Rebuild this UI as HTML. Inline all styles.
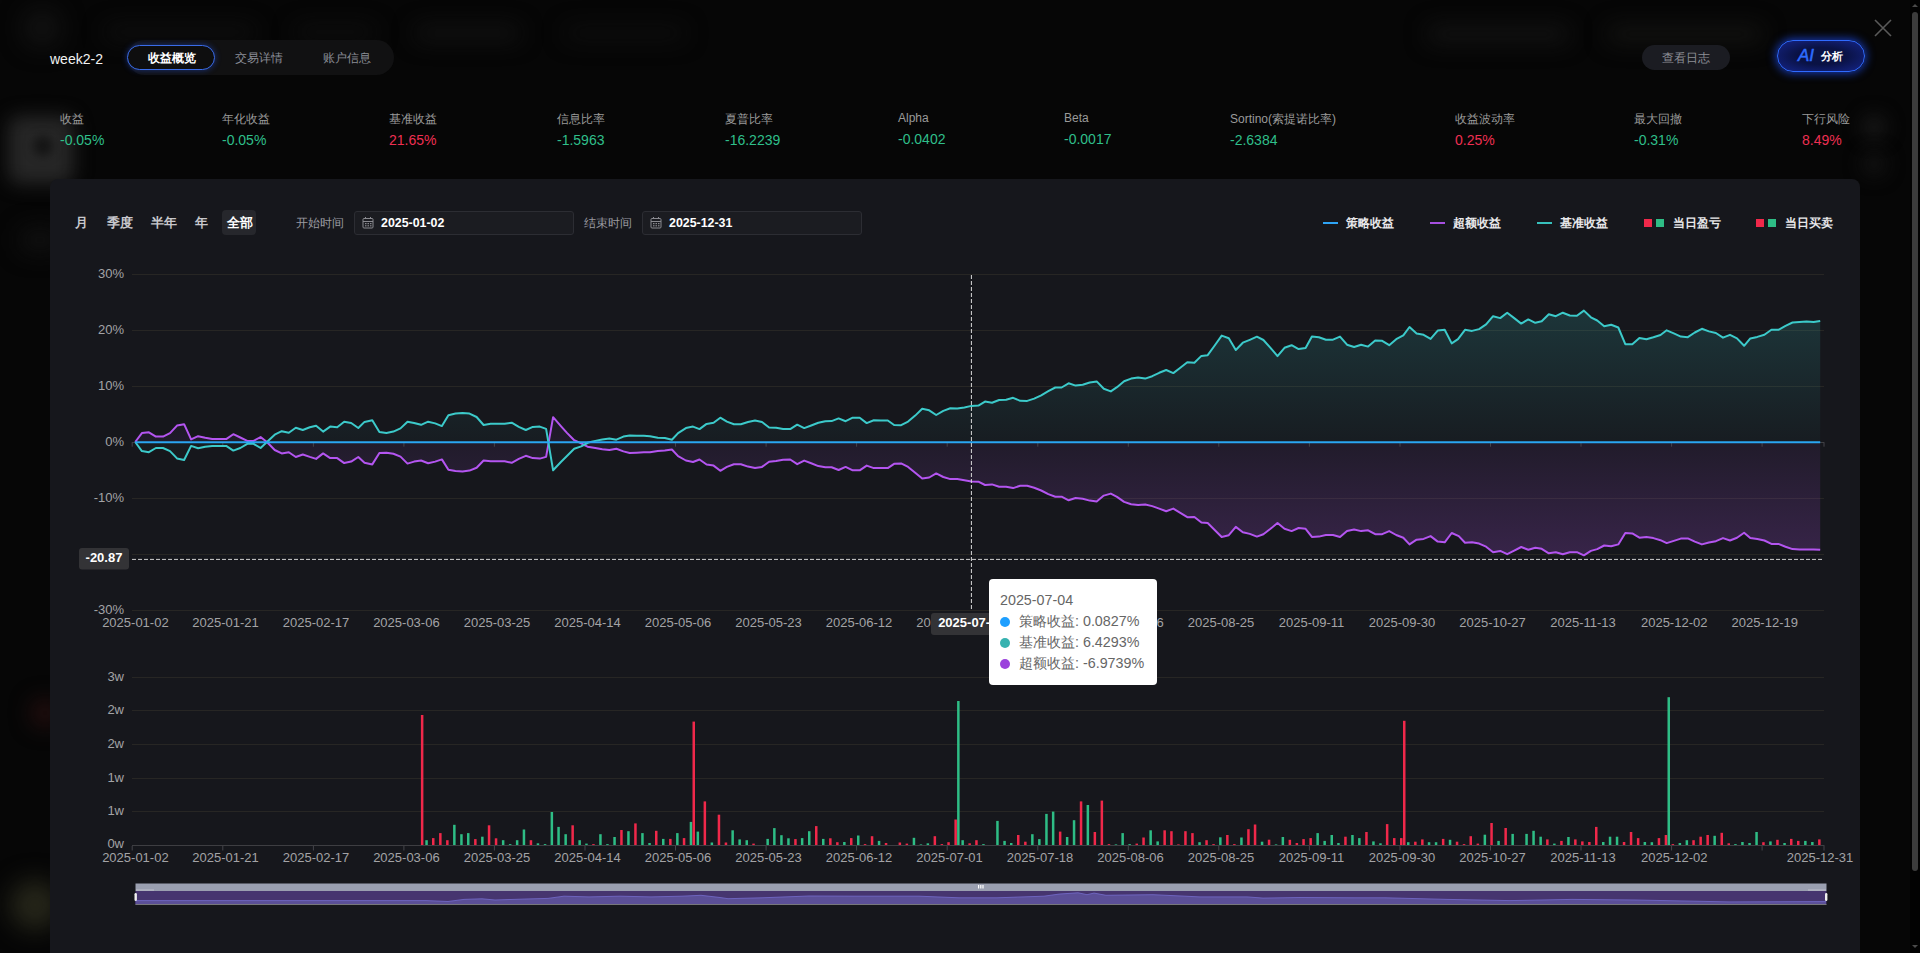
<!DOCTYPE html>
<html><head><meta charset="utf-8">
<style>
*{margin:0;padding:0;box-sizing:border-box}
html,body{width:1920px;height:953px;overflow:hidden;background:#070707;font-family:"Liberation Sans",sans-serif}
.abs{position:absolute;white-space:nowrap}
#bg{position:absolute;left:0;top:0;width:1920px;height:953px;background:#060606}
.blob{position:absolute;border-radius:50%;filter:blur(14px)}
.tabs{left:127px;top:40px;width:267px;height:35px;border-radius:18px;background:#111112}
.tab{font-size:12px;color:#8a8d96;top:50px;line-height:17px}
.act{left:127px;top:45px;width:88px;height:25px;border:1.6px solid #3a6ce8;border-radius:13px;background:#0e0e0f;box-shadow:0 0 6px rgba(40,90,255,.45)}
.lbl{font-size:12px;color:#9a9a9a;top:111px;line-height:16px}
.val{font-size:14px;top:131px;line-height:18px}
.g{color:#2fbf8a}.r{color:#ee2f52}
#panel{position:absolute;left:50px;top:179px;width:1810px;height:800px;background:#16171c;border-radius:8px}
.pb{font-size:12.5px;color:#c8c8cc;top:215px;line-height:16px;font-weight:bold}
.inp{top:211px;height:24px;border:1px solid #2c2d33;border-radius:3px;background:#1b1c21}
.dt{font-size:12.4px;color:#fff;font-weight:bold;line-height:16px}
.leg{font-size:12px;color:#e8e8ea;font-weight:bold;top:215px;line-height:16px}
#chart text{font-family:"Liberation Sans",sans-serif}
.yl{font-size:13px;fill:#a3a3a6}
.xl{font-size:13px;fill:#a3a3a6}
.lb{font-size:13px;fill:#fff;font-weight:bold}
.tip{left:989px;top:579px;width:168px;height:106px;background:#fff;border-radius:4px}
.tt{font-size:14.3px;color:#666;line-height:18px}
.dot{width:10px;height:10px;border-radius:5px}
</style></head><body>
<div id="bg"></div>
<div class="blob" style="left:28px;top:14px;width:28px;height:28px;background:#1c1c1c"></div>
<div class="blob" style="left:105px;top:26px;width:150px;height:12px;background:#111;border-radius:7px;filter:blur(11px)"></div>
<div class="blob" style="left:295px;top:26px;width:80px;height:12px;background:#101010;border-radius:7px;filter:blur(11px)"></div>
<div class="blob" style="left:415px;top:26px;width:105px;height:14px;background:#131313;border-radius:7px;filter:blur(11px)"></div>
<div class="blob" style="left:565px;top:27px;width:120px;height:12px;background:#0f0f0f;border-radius:7px;filter:blur(11px)"></div>
<div class="blob" style="left:1427px;top:26px;width:142px;height:16px;background:#141414;border-radius:8px;filter:blur(11px)"></div>
<div class="blob" style="left:1607px;top:26px;width:156px;height:16px;background:#141412;border-radius:8px;filter:blur(11px)"></div>
<div class="blob" style="left:8px;top:116px;width:66px;height:68px;background:#262626;border-radius:12px;filter:blur(9px)"></div>
<div class="blob" style="left:33px;top:136px;width:20px;height:20px;background:#151515;filter:blur(5px)"></div>
<div class="blob" style="left:20px;top:228px;width:40px;height:24px;background:#101010;border-radius:8px;filter:blur(11px)"></div>
<div class="blob" style="left:32px;top:700px;width:26px;height:26px;background:#2a1010;filter:blur(11px)"></div>
<div class="blob" style="left:10px;top:880px;width:50px;height:50px;background:#26261a;filter:blur(12px)"></div>
<div class="blob" style="left:1862px;top:115px;width:24px;height:24px;background:#181818;filter:blur(9px)"></div>
<div class="blob" style="left:1862px;top:152px;width:24px;height:24px;background:#121212;filter:blur(9px)"></div>

<!-- header -->
<div class="abs" style="left:50px;top:50px;font-size:14px;color:#f2f2f2;line-height:18px">week2-2</div>
<div class="abs tabs"></div>
<div class="abs act"></div>
<div class="abs" style="left:148px;top:50px;font-size:12px;color:#fff;font-weight:bold;line-height:17px">收益概览</div>
<div class="abs tab" style="left:235px">交易详情</div>
<div class="abs tab" style="left:323px">账户信息</div>

<div class="abs" style="left:1642px;top:45px;width:88px;height:25px;border-radius:13px;background:#1b1c22"></div>
<div class="abs" style="left:1662px;top:50px;font-size:12px;color:#8d8f96;line-height:17px">查看日志</div>
<div class="abs" style="left:1777px;top:40px;width:88px;height:32px;border-radius:16px;border:1.5px solid #2f6bff;background:radial-gradient(ellipse at center,#0a1244 40%,#15258a 100%);box-shadow:0 0 10px 1px rgba(30,80,255,.75)"></div>
<div class="abs" style="left:1798px;top:46px;font-size:17px;color:#2d6cff;font-weight:normal;font-style:italic;line-height:20px;-webkit-text-stroke:0.5px #2d6cff">AI</div>
<div class="abs" style="left:1821px;top:49px;font-size:11px;color:#fff;font-weight:bold;line-height:15px">分析</div>
<svg class="abs" style="left:1874px;top:19px" width="18" height="18"><path d="M1 1L17 17M17 1L1 17" stroke="#5a5a5a" stroke-width="1.6"/></svg>
<!-- scrollbar -->
<div class="abs" style="left:1910px;top:0;width:10px;height:953px;background:#020202"></div>
<div class="abs" style="left:1912px;top:12px;width:6px;height:859px;border-radius:3px;background:#3c3c3c"></div>
<svg class="abs" style="left:1910px;top:0" width="10" height="953"><path d="M2 7L5 4L8 7Z" fill="#4a4a4a"/><path d="M2 945L5 948L8 945Z" fill="#4a4a4a"/></svg>

<!-- metrics -->
<div class="abs lbl" style="left:60px">收益</div><div class="abs val g" style="left:60px">-0.05%</div>
<div class="abs lbl" style="left:222px">年化收益</div><div class="abs val g" style="left:222px">-0.05%</div>
<div class="abs lbl" style="left:389px">基准收益</div><div class="abs val r" style="left:389px">21.65%</div>
<div class="abs lbl" style="left:557px">信息比率</div><div class="abs val g" style="left:557px">-1.5963</div>
<div class="abs lbl" style="left:725px">夏普比率</div><div class="abs val g" style="left:725px">-16.2239</div>
<div class="abs lbl" style="left:898px;top:110px">Alpha</div><div class="abs val g" style="left:898px;top:130px">-0.0402</div>
<div class="abs lbl" style="left:1064px;top:110px">Beta</div><div class="abs val g" style="left:1064px;top:130px">-0.0017</div>
<div class="abs lbl" style="left:1230px">Sortino(索提诺比率)</div><div class="abs val g" style="left:1230px">-2.6384</div>
<div class="abs lbl" style="left:1455px">收益波动率</div><div class="abs val r" style="left:1455px">0.25%</div>
<div class="abs lbl" style="left:1634px">最大回撤</div><div class="abs val g" style="left:1634px">-0.31%</div>
<div class="abs lbl" style="left:1802px">下行风险</div><div class="abs val r" style="left:1802px">8.49%</div>

<div id="panel"></div>
<!-- period buttons -->
<div class="abs pb" style="left:75px">月</div>
<div class="abs pb" style="left:107px">季度</div>
<div class="abs pb" style="left:151px">半年</div>
<div class="abs pb" style="left:195px">年</div>
<div class="abs" style="left:222px;top:210px;width:34px;height:25px;border-radius:4px;background:#26272c"></div>
<div class="abs pb" style="left:227px;color:#fff">全部</div>
<div class="abs" style="left:296px;top:215px;font-size:12px;color:#9a9aa0;line-height:16px">开始时间</div>
<div class="abs inp" style="left:354px;width:220px"></div>
<div class="abs dt" style="left:381px;top:215px">2025-01-02</div>
<div class="abs" style="left:584px;top:215px;font-size:12px;color:#9a9aa0;line-height:16px">结束时间</div>
<div class="abs inp" style="left:642px;width:220px"></div>
<div class="abs dt" style="left:669px;top:215px">2025-12-31</div>

<!-- legend -->
<div class="abs" style="left:1323px;top:222px;width:15px;height:2px;background:#2ea4f5"></div>
<div class="abs leg" style="left:1346px">策略收益</div>
<div class="abs" style="left:1430px;top:222px;width:15px;height:2px;background:#a64fe0"></div>
<div class="abs leg" style="left:1453px">超额收益</div>
<div class="abs" style="left:1537px;top:222px;width:15px;height:2px;background:#37c0bc"></div>
<div class="abs leg" style="left:1560px">基准收益</div>
<div class="abs" style="left:1644px;top:219px;width:8px;height:8px;background:#f0284a"></div>
<div class="abs" style="left:1656px;top:219px;width:8px;height:8px;background:#2ebd85"></div>
<div class="abs leg" style="left:1673px">当日盈亏</div>
<div class="abs" style="left:1756px;top:219px;width:8px;height:8px;background:#f0284a"></div>
<div class="abs" style="left:1768px;top:219px;width:8px;height:8px;background:#2ebd85"></div>
<div class="abs leg" style="left:1785px">当日买卖</div>

<svg id="chart" class="abs" style="left:0;top:0" width="1920" height="953">
<!--CHART-->
<defs>
<linearGradient id="gt" gradientUnits="userSpaceOnUse" x1="0" y1="312" x2="0" y2="442"><stop offset="0" stop-color="#3cc8c8" stop-opacity="0.17"/><stop offset="1" stop-color="#3cc8c8" stop-opacity="0.03"/></linearGradient>
<linearGradient id="gp" gradientUnits="userSpaceOnUse" x1="0" y1="555" x2="0" y2="420"><stop offset="0" stop-color="#b455f0" stop-opacity="0.21"/><stop offset="1" stop-color="#b455f0" stop-opacity="0.04"/></linearGradient>
</defs>
<line x1="132" y1="274.5" x2="1824" y2="274.5" stroke="#272624" stroke-width="1"/>
<text x="124" y="277.8" text-anchor="end" class="yl">30%</text>
<line x1="132" y1="330.5" x2="1824" y2="330.5" stroke="#272624" stroke-width="1"/>
<text x="124" y="333.8" text-anchor="end" class="yl">20%</text>
<line x1="132" y1="386.5" x2="1824" y2="386.5" stroke="#272624" stroke-width="1"/>
<text x="124" y="389.8" text-anchor="end" class="yl">10%</text>
<line x1="132" y1="442.5" x2="1824" y2="442.5" stroke="#272624" stroke-width="1"/>
<text x="124" y="445.8" text-anchor="end" class="yl">0%</text>
<line x1="132" y1="498.5" x2="1824" y2="498.5" stroke="#272624" stroke-width="1"/>
<text x="124" y="501.8" text-anchor="end" class="yl">-10%</text>
<line x1="132" y1="554.5" x2="1824" y2="554.5" stroke="#272624" stroke-width="1"/>
<text x="124" y="557.8" text-anchor="end" class="yl">-20%</text>
<line x1="132" y1="610.5" x2="1824" y2="610.5" stroke="#272624" stroke-width="1"/>
<text x="124" y="613.8" text-anchor="end" class="yl">-30%</text>
<polygon points="135.2,442.2 135.2,442.0 141.9,451.1 148.9,452.2 155.9,448.0 163.0,448.0 170.0,451.1 177.0,458.4 184.1,460.0 191.1,445.9 198.1,448.3 205.2,446.7 212.2,445.9 219.2,445.9 226.2,445.9 233.3,450.6 240.3,448.0 247.3,443.8 253.6,443.8 260.6,448.0 266.9,442.0 274.7,434.7 281.7,431.2 288.8,432.8 295.8,427.7 302.8,430.0 309.8,427.3 316.1,425.8 323.1,431.6 330.2,426.6 337.2,427.2 344.2,421.7 351.2,423.0 358.3,428.0 364.5,421.9 372.3,420.3 379.4,432.0 386.4,433.1 393.4,431.6 400.5,428.4 407.5,421.7 414.1,423.0 421.1,424.8 428.1,421.7 435.2,423.4 441.9,426.1 448.4,415.2 455.5,413.6 462.5,413.1 469.5,413.6 476.6,417.0 483.6,425.0 490.6,423.8 497.7,423.8 504.7,423.8 511.7,422.7 518.8,426.9 525.8,430.0 532.8,426.9 539.8,426.6 546.1,428.9 553.1,470.3 560.9,462.0 567.2,455.8 574.2,448.8 581.2,446.4 588.3,442.5 595.3,440.9 602.3,439.4 609.4,438.6 616.4,439.7 623.4,436.6 629.7,435.5 636.7,435.8 643.8,435.8 650.0,436.2 657.8,437.8 664.8,438.1 671.9,439.7 678.1,433.1 685.9,428.1 693.0,426.6 699.5,429.1 706.6,423.9 713.6,422.8 720.3,417.7 726.9,421.6 733.9,424.2 740.9,424.2 748.0,422.0 755.0,420.5 762.0,422.0 769.1,427.5 776.1,427.8 783.1,429.1 790.2,429.1 797.2,424.7 804.2,428.1 811.2,425.5 818.3,422.8 825.3,421.2 831.6,421.1 838.6,418.4 845.6,421.2 852.7,417.7 859.7,417.7 866.7,423.1 873.8,420.3 880.8,420.5 887.8,420.5 894.1,425.0 901.1,425.2 908.1,421.6 915.2,415.6 922.2,408.8 929.2,410.3 936.2,415.0 943.3,410.9 950.3,408.3 957.3,408.6 964.4,407.5 971.4,405.9 978.4,405.6 985.0,401.6 992.0,402.8 999.1,400.0 1006.1,399.7 1013.1,397.8 1020.2,400.8 1027.2,400.9 1034.2,398.6 1041.2,395.3 1048.3,391.1 1055.3,387.5 1061.6,387.5 1068.6,383.3 1075.6,385.6 1082.7,384.8 1089.7,382.5 1096.7,381.4 1103.8,388.8 1110.8,391.4 1117.0,387.2 1124.1,381.2 1131.1,378.6 1138.1,377.5 1145.2,378.6 1152.2,376.2 1159.2,372.8 1166.2,370.0 1173.3,373.1 1180.3,367.7 1187.3,362.2 1194.4,362.7 1201.4,355.9 1207.7,355.2 1214.7,345.5 1221.7,335.6 1228.8,338.3 1235.8,350.0 1242.8,342.7 1249.8,339.8 1256.9,336.7 1263.4,340.0 1270.5,347.8 1277.5,356.1 1284.5,347.8 1291.6,345.2 1298.6,349.1 1305.6,348.1 1311.9,336.6 1318.9,337.3 1325.9,339.7 1333.0,339.7 1340.0,336.6 1347.0,344.7 1354.1,347.0 1361.1,344.7 1368.1,346.6 1375.2,340.5 1382.2,340.8 1389.2,345.2 1396.2,339.2 1403.3,335.3 1409.5,327.0 1416.6,333.4 1423.6,334.8 1430.6,338.9 1437.7,330.6 1444.7,329.8 1451.7,343.4 1458.0,339.2 1465.0,329.8 1472.0,330.9 1479.1,329.1 1486.1,324.4 1493.1,316.2 1500.2,318.1 1507.2,312.7 1514.2,318.1 1521.2,323.6 1528.3,319.4 1535.3,322.8 1541.7,321.2 1548.8,314.2 1555.8,316.2 1562.8,312.7 1569.8,315.5 1576.9,315.8 1583.9,310.6 1590.9,317.3 1597.2,320.5 1604.2,326.2 1611.2,324.7 1618.3,327.5 1625.3,344.2 1632.3,344.2 1639.4,338.0 1646.4,339.2 1653.4,337.2 1660.5,335.0 1666.7,330.3 1673.8,333.4 1680.8,336.6 1687.8,337.2 1694.8,332.5 1701.9,328.8 1708.9,331.4 1715.9,333.0 1723.0,337.7 1730.0,334.8 1737.0,338.4 1744.1,345.8 1750.3,338.4 1757.3,336.9 1764.4,334.8 1771.4,329.8 1778.4,329.8 1785.5,325.9 1792.5,322.5 1799.5,322.0 1806.6,321.6 1813.6,322.0 1820.2,320.9 1820.2,442.2" fill="url(#gt)"/>
<polygon points="135.2,442.2 135.2,442.0 141.9,433.1 148.9,432.3 155.9,436.6 163.0,436.6 170.0,433.1 177.0,425.6 184.1,424.2 191.1,439.4 198.1,436.2 205.2,437.8 212.2,439.1 219.2,439.1 226.2,439.1 233.3,434.2 240.3,437.5 247.3,440.9 253.6,440.9 260.6,437.0 266.9,442.0 274.7,450.0 281.7,453.4 288.8,452.2 295.8,457.0 302.8,454.5 309.8,456.9 316.1,458.9 323.1,453.4 330.2,458.1 337.2,458.1 344.2,463.1 351.2,461.6 358.3,457.0 364.5,462.8 372.3,464.4 379.4,453.0 386.4,452.7 393.4,453.8 400.5,456.6 407.5,463.6 414.1,461.6 421.1,460.5 428.1,463.3 435.2,461.6 441.9,459.4 448.4,469.8 455.5,470.9 462.5,471.4 469.5,470.6 476.6,467.8 483.6,460.5 490.6,461.2 497.7,461.2 504.7,461.2 511.7,462.8 518.8,458.9 525.8,455.8 532.8,458.1 539.8,458.6 546.1,456.9 553.1,417.2 560.9,426.1 567.2,433.1 574.2,440.2 581.2,443.3 587.5,446.7 595.3,448.0 602.3,449.2 609.4,450.0 616.4,448.8 623.4,451.4 629.7,453.0 636.7,452.7 643.8,452.3 650.0,452.2 657.8,451.1 664.8,450.6 671.9,449.5 678.1,456.1 685.9,460.5 693.0,462.0 699.5,459.5 706.6,464.5 713.6,465.6 720.3,470.8 726.9,466.9 733.9,464.2 740.9,464.2 748.0,466.6 755.0,468.1 762.0,466.9 769.1,461.7 776.1,461.1 783.1,459.8 790.2,459.5 797.2,464.2 804.2,460.6 811.2,463.3 818.3,466.1 825.3,467.2 831.6,467.2 838.6,470.0 845.6,466.9 852.7,470.3 859.7,470.3 866.7,465.6 873.8,468.1 880.8,468.1 887.8,468.1 894.1,463.8 901.1,463.4 908.1,466.9 915.2,472.8 922.2,478.6 929.2,477.5 936.2,473.4 943.3,477.0 950.3,479.1 957.3,479.1 964.4,480.2 971.4,481.4 978.4,481.7 985.0,485.0 992.0,484.4 999.1,486.7 1006.1,486.7 1013.1,488.1 1020.2,485.8 1027.2,485.8 1034.2,487.8 1041.2,490.5 1048.3,494.1 1055.3,496.7 1061.6,496.7 1068.6,500.3 1075.6,498.0 1082.7,498.8 1089.7,500.6 1096.7,501.4 1103.8,495.6 1110.8,493.6 1117.0,496.9 1124.1,501.9 1131.1,504.2 1138.1,505.0 1145.2,504.5 1152.2,506.1 1159.2,508.6 1166.2,511.2 1173.3,508.6 1180.3,512.8 1187.3,517.2 1194.4,517.0 1201.4,522.5 1207.7,523.0 1214.7,530.0 1221.7,537.0 1228.8,535.2 1235.8,526.9 1242.8,532.3 1249.8,533.9 1256.9,536.6 1263.4,534.2 1270.5,528.8 1277.5,523.0 1284.5,528.8 1291.6,531.1 1298.6,528.0 1305.6,528.8 1311.9,536.9 1318.9,536.6 1325.9,535.0 1333.0,535.0 1340.0,537.0 1347.0,531.1 1354.1,529.5 1361.1,531.1 1368.1,530.3 1375.2,534.2 1382.2,534.2 1389.2,531.1 1396.2,535.0 1403.3,537.7 1409.5,544.4 1416.6,539.7 1423.6,538.9 1430.6,536.1 1437.7,541.6 1444.7,542.3 1451.7,533.0 1458.8,536.1 1465.0,542.8 1472.0,542.3 1479.1,543.6 1486.1,546.7 1493.1,552.2 1500.2,550.9 1507.2,554.2 1514.2,550.6 1521.2,547.0 1528.3,549.8 1535.3,547.8 1541.7,548.8 1548.8,553.3 1555.8,552.2 1562.8,554.2 1569.8,552.2 1576.9,552.2 1583.9,555.3 1590.9,550.9 1597.2,549.1 1604.2,545.5 1611.2,546.2 1618.3,544.4 1625.3,533.0 1632.3,533.4 1639.4,537.7 1646.4,536.9 1653.4,538.1 1660.5,540.2 1666.7,543.1 1673.8,540.9 1680.8,538.6 1687.8,538.4 1694.8,541.6 1701.9,544.4 1708.9,542.5 1715.9,541.2 1723.0,538.1 1730.0,540.5 1737.0,537.8 1744.1,532.7 1750.3,538.1 1757.3,538.9 1764.4,540.5 1771.4,543.9 1778.4,543.9 1785.5,546.7 1792.5,549.1 1799.5,549.5 1806.6,549.5 1813.6,549.4 1820.2,549.8 1820.2,442.2" fill="url(#gp)"/>
<line x1="132" y1="442.5" x2="1824" y2="442.5" stroke="#3e3e42" stroke-width="1"/>
<line x1="132.2" y1="442.2" x2="132.2" y2="446.7" stroke="#45454a" stroke-width="1"/>
<line x1="222.8" y1="442.2" x2="222.8" y2="446.7" stroke="#45454a" stroke-width="1"/>
<line x1="313.4" y1="442.2" x2="313.4" y2="446.7" stroke="#45454a" stroke-width="1"/>
<line x1="403.9" y1="442.2" x2="403.9" y2="446.7" stroke="#45454a" stroke-width="1"/>
<line x1="494.4" y1="442.2" x2="494.4" y2="446.7" stroke="#45454a" stroke-width="1"/>
<line x1="585.0" y1="442.2" x2="585.0" y2="446.7" stroke="#45454a" stroke-width="1"/>
<line x1="675.5" y1="442.2" x2="675.5" y2="446.7" stroke="#45454a" stroke-width="1"/>
<line x1="766.1" y1="442.2" x2="766.1" y2="446.7" stroke="#45454a" stroke-width="1"/>
<line x1="856.6" y1="442.2" x2="856.6" y2="446.7" stroke="#45454a" stroke-width="1"/>
<line x1="947.2" y1="442.2" x2="947.2" y2="446.7" stroke="#45454a" stroke-width="1"/>
<line x1="1037.8" y1="442.2" x2="1037.8" y2="446.7" stroke="#45454a" stroke-width="1"/>
<line x1="1128.3" y1="442.2" x2="1128.3" y2="446.7" stroke="#45454a" stroke-width="1"/>
<line x1="1218.8" y1="442.2" x2="1218.8" y2="446.7" stroke="#45454a" stroke-width="1"/>
<line x1="1309.4" y1="442.2" x2="1309.4" y2="446.7" stroke="#45454a" stroke-width="1"/>
<line x1="1400.0" y1="442.2" x2="1400.0" y2="446.7" stroke="#45454a" stroke-width="1"/>
<line x1="1490.5" y1="442.2" x2="1490.5" y2="446.7" stroke="#45454a" stroke-width="1"/>
<line x1="1581.0" y1="442.2" x2="1581.0" y2="446.7" stroke="#45454a" stroke-width="1"/>
<line x1="1671.6" y1="442.2" x2="1671.6" y2="446.7" stroke="#45454a" stroke-width="1"/>
<line x1="1762.1" y1="442.2" x2="1762.1" y2="446.7" stroke="#45454a" stroke-width="1"/>
<line x1="1824" y1="442.2" x2="1824" y2="446.7" stroke="#45454a" stroke-width="1"/>
<polyline points="135.2,442.0 141.9,433.1 148.9,432.3 155.9,436.6 163.0,436.6 170.0,433.1 177.0,425.6 184.1,424.2 191.1,439.4 198.1,436.2 205.2,437.8 212.2,439.1 219.2,439.1 226.2,439.1 233.3,434.2 240.3,437.5 247.3,440.9 253.6,440.9 260.6,437.0 266.9,442.0 274.7,450.0 281.7,453.4 288.8,452.2 295.8,457.0 302.8,454.5 309.8,456.9 316.1,458.9 323.1,453.4 330.2,458.1 337.2,458.1 344.2,463.1 351.2,461.6 358.3,457.0 364.5,462.8 372.3,464.4 379.4,453.0 386.4,452.7 393.4,453.8 400.5,456.6 407.5,463.6 414.1,461.6 421.1,460.5 428.1,463.3 435.2,461.6 441.9,459.4 448.4,469.8 455.5,470.9 462.5,471.4 469.5,470.6 476.6,467.8 483.6,460.5 490.6,461.2 497.7,461.2 504.7,461.2 511.7,462.8 518.8,458.9 525.8,455.8 532.8,458.1 539.8,458.6 546.1,456.9 553.1,417.2 560.9,426.1 567.2,433.1 574.2,440.2 581.2,443.3 587.5,446.7 595.3,448.0 602.3,449.2 609.4,450.0 616.4,448.8 623.4,451.4 629.7,453.0 636.7,452.7 643.8,452.3 650.0,452.2 657.8,451.1 664.8,450.6 671.9,449.5 678.1,456.1 685.9,460.5 693.0,462.0 699.5,459.5 706.6,464.5 713.6,465.6 720.3,470.8 726.9,466.9 733.9,464.2 740.9,464.2 748.0,466.6 755.0,468.1 762.0,466.9 769.1,461.7 776.1,461.1 783.1,459.8 790.2,459.5 797.2,464.2 804.2,460.6 811.2,463.3 818.3,466.1 825.3,467.2 831.6,467.2 838.6,470.0 845.6,466.9 852.7,470.3 859.7,470.3 866.7,465.6 873.8,468.1 880.8,468.1 887.8,468.1 894.1,463.8 901.1,463.4 908.1,466.9 915.2,472.8 922.2,478.6 929.2,477.5 936.2,473.4 943.3,477.0 950.3,479.1 957.3,479.1 964.4,480.2 971.4,481.4 978.4,481.7 985.0,485.0 992.0,484.4 999.1,486.7 1006.1,486.7 1013.1,488.1 1020.2,485.8 1027.2,485.8 1034.2,487.8 1041.2,490.5 1048.3,494.1 1055.3,496.7 1061.6,496.7 1068.6,500.3 1075.6,498.0 1082.7,498.8 1089.7,500.6 1096.7,501.4 1103.8,495.6 1110.8,493.6 1117.0,496.9 1124.1,501.9 1131.1,504.2 1138.1,505.0 1145.2,504.5 1152.2,506.1 1159.2,508.6 1166.2,511.2 1173.3,508.6 1180.3,512.8 1187.3,517.2 1194.4,517.0 1201.4,522.5 1207.7,523.0 1214.7,530.0 1221.7,537.0 1228.8,535.2 1235.8,526.9 1242.8,532.3 1249.8,533.9 1256.9,536.6 1263.4,534.2 1270.5,528.8 1277.5,523.0 1284.5,528.8 1291.6,531.1 1298.6,528.0 1305.6,528.8 1311.9,536.9 1318.9,536.6 1325.9,535.0 1333.0,535.0 1340.0,537.0 1347.0,531.1 1354.1,529.5 1361.1,531.1 1368.1,530.3 1375.2,534.2 1382.2,534.2 1389.2,531.1 1396.2,535.0 1403.3,537.7 1409.5,544.4 1416.6,539.7 1423.6,538.9 1430.6,536.1 1437.7,541.6 1444.7,542.3 1451.7,533.0 1458.8,536.1 1465.0,542.8 1472.0,542.3 1479.1,543.6 1486.1,546.7 1493.1,552.2 1500.2,550.9 1507.2,554.2 1514.2,550.6 1521.2,547.0 1528.3,549.8 1535.3,547.8 1541.7,548.8 1548.8,553.3 1555.8,552.2 1562.8,554.2 1569.8,552.2 1576.9,552.2 1583.9,555.3 1590.9,550.9 1597.2,549.1 1604.2,545.5 1611.2,546.2 1618.3,544.4 1625.3,533.0 1632.3,533.4 1639.4,537.7 1646.4,536.9 1653.4,538.1 1660.5,540.2 1666.7,543.1 1673.8,540.9 1680.8,538.6 1687.8,538.4 1694.8,541.6 1701.9,544.4 1708.9,542.5 1715.9,541.2 1723.0,538.1 1730.0,540.5 1737.0,537.8 1744.1,532.7 1750.3,538.1 1757.3,538.9 1764.4,540.5 1771.4,543.9 1778.4,543.9 1785.5,546.7 1792.5,549.1 1799.5,549.5 1806.6,549.5 1813.6,549.4 1820.2,549.8" fill="none" stroke="#b455f0" stroke-width="2" stroke-linejoin="round"/>
<polyline points="135.2,442.0 141.9,451.1 148.9,452.2 155.9,448.0 163.0,448.0 170.0,451.1 177.0,458.4 184.1,460.0 191.1,445.9 198.1,448.3 205.2,446.7 212.2,445.9 219.2,445.9 226.2,445.9 233.3,450.6 240.3,448.0 247.3,443.8 253.6,443.8 260.6,448.0 266.9,442.0 274.7,434.7 281.7,431.2 288.8,432.8 295.8,427.7 302.8,430.0 309.8,427.3 316.1,425.8 323.1,431.6 330.2,426.6 337.2,427.2 344.2,421.7 351.2,423.0 358.3,428.0 364.5,421.9 372.3,420.3 379.4,432.0 386.4,433.1 393.4,431.6 400.5,428.4 407.5,421.7 414.1,423.0 421.1,424.8 428.1,421.7 435.2,423.4 441.9,426.1 448.4,415.2 455.5,413.6 462.5,413.1 469.5,413.6 476.6,417.0 483.6,425.0 490.6,423.8 497.7,423.8 504.7,423.8 511.7,422.7 518.8,426.9 525.8,430.0 532.8,426.9 539.8,426.6 546.1,428.9 553.1,470.3 560.9,462.0 567.2,455.8 574.2,448.8 581.2,446.4 588.3,442.5 595.3,440.9 602.3,439.4 609.4,438.6 616.4,439.7 623.4,436.6 629.7,435.5 636.7,435.8 643.8,435.8 650.0,436.2 657.8,437.8 664.8,438.1 671.9,439.7 678.1,433.1 685.9,428.1 693.0,426.6 699.5,429.1 706.6,423.9 713.6,422.8 720.3,417.7 726.9,421.6 733.9,424.2 740.9,424.2 748.0,422.0 755.0,420.5 762.0,422.0 769.1,427.5 776.1,427.8 783.1,429.1 790.2,429.1 797.2,424.7 804.2,428.1 811.2,425.5 818.3,422.8 825.3,421.2 831.6,421.1 838.6,418.4 845.6,421.2 852.7,417.7 859.7,417.7 866.7,423.1 873.8,420.3 880.8,420.5 887.8,420.5 894.1,425.0 901.1,425.2 908.1,421.6 915.2,415.6 922.2,408.8 929.2,410.3 936.2,415.0 943.3,410.9 950.3,408.3 957.3,408.6 964.4,407.5 971.4,405.9 978.4,405.6 985.0,401.6 992.0,402.8 999.1,400.0 1006.1,399.7 1013.1,397.8 1020.2,400.8 1027.2,400.9 1034.2,398.6 1041.2,395.3 1048.3,391.1 1055.3,387.5 1061.6,387.5 1068.6,383.3 1075.6,385.6 1082.7,384.8 1089.7,382.5 1096.7,381.4 1103.8,388.8 1110.8,391.4 1117.0,387.2 1124.1,381.2 1131.1,378.6 1138.1,377.5 1145.2,378.6 1152.2,376.2 1159.2,372.8 1166.2,370.0 1173.3,373.1 1180.3,367.7 1187.3,362.2 1194.4,362.7 1201.4,355.9 1207.7,355.2 1214.7,345.5 1221.7,335.6 1228.8,338.3 1235.8,350.0 1242.8,342.7 1249.8,339.8 1256.9,336.7 1263.4,340.0 1270.5,347.8 1277.5,356.1 1284.5,347.8 1291.6,345.2 1298.6,349.1 1305.6,348.1 1311.9,336.6 1318.9,337.3 1325.9,339.7 1333.0,339.7 1340.0,336.6 1347.0,344.7 1354.1,347.0 1361.1,344.7 1368.1,346.6 1375.2,340.5 1382.2,340.8 1389.2,345.2 1396.2,339.2 1403.3,335.3 1409.5,327.0 1416.6,333.4 1423.6,334.8 1430.6,338.9 1437.7,330.6 1444.7,329.8 1451.7,343.4 1458.0,339.2 1465.0,329.8 1472.0,330.9 1479.1,329.1 1486.1,324.4 1493.1,316.2 1500.2,318.1 1507.2,312.7 1514.2,318.1 1521.2,323.6 1528.3,319.4 1535.3,322.8 1541.7,321.2 1548.8,314.2 1555.8,316.2 1562.8,312.7 1569.8,315.5 1576.9,315.8 1583.9,310.6 1590.9,317.3 1597.2,320.5 1604.2,326.2 1611.2,324.7 1618.3,327.5 1625.3,344.2 1632.3,344.2 1639.4,338.0 1646.4,339.2 1653.4,337.2 1660.5,335.0 1666.7,330.3 1673.8,333.4 1680.8,336.6 1687.8,337.2 1694.8,332.5 1701.9,328.8 1708.9,331.4 1715.9,333.0 1723.0,337.7 1730.0,334.8 1737.0,338.4 1744.1,345.8 1750.3,338.4 1757.3,336.9 1764.4,334.8 1771.4,329.8 1778.4,329.8 1785.5,325.9 1792.5,322.5 1799.5,322.0 1806.6,321.6 1813.6,322.0 1820.2,320.9" fill="none" stroke="#3ccaca" stroke-width="2" stroke-linejoin="round"/>
<line x1="135.2" y1="442.2" x2="1820.2" y2="442.2" stroke="#2aa6f2" stroke-width="2"/>
<line x1="132" y1="559.4" x2="1822" y2="559.4" stroke="#cfcfcf" stroke-width="1" stroke-dasharray="4,2"/>
<line x1="971.4" y1="275" x2="971.4" y2="610" stroke="#d8d8d8" stroke-width="1" stroke-dasharray="4,2"/>
<rect x="79" y="548" width="50" height="21.5" rx="3" fill="#333336"/>
<text x="104" y="561.5" text-anchor="middle" class="lb">-20.87</text>
<text x="135.4" y="627" text-anchor="middle" class="xl">2025-01-02</text>
<text x="225.5" y="627" text-anchor="middle" class="xl">2025-01-21</text>
<text x="316" y="627" text-anchor="middle" class="xl">2025-02-17</text>
<text x="406.4" y="627" text-anchor="middle" class="xl">2025-03-06</text>
<text x="497" y="627" text-anchor="middle" class="xl">2025-03-25</text>
<text x="587.5" y="627" text-anchor="middle" class="xl">2025-04-14</text>
<text x="678" y="627" text-anchor="middle" class="xl">2025-05-06</text>
<text x="768.5" y="627" text-anchor="middle" class="xl">2025-05-23</text>
<text x="859" y="627" text-anchor="middle" class="xl">2025-06-12</text>
<text x="949.5" y="627" text-anchor="middle" class="xl">2025-07-01</text>
<text x="1040" y="627" text-anchor="middle" class="xl">2025-07-18</text>
<text x="1130.5" y="627" text-anchor="middle" class="xl">2025-08-06</text>
<text x="1221" y="627" text-anchor="middle" class="xl">2025-08-25</text>
<text x="1311.5" y="627" text-anchor="middle" class="xl">2025-09-11</text>
<text x="1402" y="627" text-anchor="middle" class="xl">2025-09-30</text>
<text x="1492.5" y="627" text-anchor="middle" class="xl">2025-10-27</text>
<text x="1583" y="627" text-anchor="middle" class="xl">2025-11-13</text>
<text x="1674.2" y="627" text-anchor="middle" class="xl">2025-12-02</text>
<text x="1764.7" y="627" text-anchor="middle" class="xl">2025-12-19</text>
<rect x="931" y="613" width="80" height="22" rx="3" fill="#333336"/>
<text x="971.4" y="626.8" text-anchor="middle" class="lb">2025-07-04</text>
<g stroke="#8a8a90" stroke-width="1" fill="none"><rect x="363.0" y="218.5" width="10" height="9.5" rx="1"/><line x1="363.0" y1="221.5" x2="373.0" y2="221.5"/><line x1="365.5" y1="217" x2="365.5" y2="219"/><line x1="370.5" y1="217" x2="370.5" y2="219"/></g>
<g fill="#8a8a90"><rect x="365.0" y="223" width="1.5" height="1.2"/><rect x="367.5" y="223" width="1.5" height="1.2"/><rect x="370.0" y="223" width="1.5" height="1.2"/><rect x="365.0" y="225.2" width="1.5" height="1.2"/><rect x="367.5" y="225.2" width="1.5" height="1.2"/><rect x="370.0" y="225.2" width="1.5" height="1.2"/></g>
<g stroke="#8a8a90" stroke-width="1" fill="none"><rect x="651.0" y="218.5" width="10" height="9.5" rx="1"/><line x1="651.0" y1="221.5" x2="661.0" y2="221.5"/><line x1="653.5" y1="217" x2="653.5" y2="219"/><line x1="658.5" y1="217" x2="658.5" y2="219"/></g>
<g fill="#8a8a90"><rect x="653.0" y="223" width="1.5" height="1.2"/><rect x="655.5" y="223" width="1.5" height="1.2"/><rect x="658.0" y="223" width="1.5" height="1.2"/><rect x="653.0" y="225.2" width="1.5" height="1.2"/><rect x="655.5" y="225.2" width="1.5" height="1.2"/><rect x="658.0" y="225.2" width="1.5" height="1.2"/></g>
<line x1="132" y1="677.5" x2="1824" y2="677.5" stroke="#272624" stroke-width="1"/>
<text x="124" y="680.8" text-anchor="end" class="yl">3w</text>
<line x1="132" y1="710.5" x2="1824" y2="710.5" stroke="#272624" stroke-width="1"/>
<text x="124" y="713.8" text-anchor="end" class="yl">2w</text>
<line x1="132" y1="744.5" x2="1824" y2="744.5" stroke="#272624" stroke-width="1"/>
<text x="124" y="747.8" text-anchor="end" class="yl">2w</text>
<line x1="132" y1="778.5" x2="1824" y2="778.5" stroke="#272624" stroke-width="1"/>
<text x="124" y="781.8" text-anchor="end" class="yl">1w</text>
<line x1="132" y1="811.5" x2="1824" y2="811.5" stroke="#272624" stroke-width="1"/>
<text x="124" y="814.8" text-anchor="end" class="yl">1w</text>
<line x1="132" y1="845.5" x2="1824.5" y2="845.5" stroke="#3e3e42" stroke-width="1"/>
<text x="124" y="848.2" text-anchor="end" class="yl">0w</text>
<line x1="132.2" y1="846" x2="132.2" y2="850.5" stroke="#45454a" stroke-width="1"/>
<line x1="222.8" y1="846" x2="222.8" y2="850.5" stroke="#45454a" stroke-width="1"/>
<line x1="313.4" y1="846" x2="313.4" y2="850.5" stroke="#45454a" stroke-width="1"/>
<line x1="403.9" y1="846" x2="403.9" y2="850.5" stroke="#45454a" stroke-width="1"/>
<line x1="494.4" y1="846" x2="494.4" y2="850.5" stroke="#45454a" stroke-width="1"/>
<line x1="585.0" y1="846" x2="585.0" y2="850.5" stroke="#45454a" stroke-width="1"/>
<line x1="675.5" y1="846" x2="675.5" y2="850.5" stroke="#45454a" stroke-width="1"/>
<line x1="766.1" y1="846" x2="766.1" y2="850.5" stroke="#45454a" stroke-width="1"/>
<line x1="856.6" y1="846" x2="856.6" y2="850.5" stroke="#45454a" stroke-width="1"/>
<line x1="947.2" y1="846" x2="947.2" y2="850.5" stroke="#45454a" stroke-width="1"/>
<line x1="1037.8" y1="846" x2="1037.8" y2="850.5" stroke="#45454a" stroke-width="1"/>
<line x1="1128.3" y1="846" x2="1128.3" y2="850.5" stroke="#45454a" stroke-width="1"/>
<line x1="1218.8" y1="846" x2="1218.8" y2="850.5" stroke="#45454a" stroke-width="1"/>
<line x1="1309.4" y1="846" x2="1309.4" y2="850.5" stroke="#45454a" stroke-width="1"/>
<line x1="1400.0" y1="846" x2="1400.0" y2="850.5" stroke="#45454a" stroke-width="1"/>
<line x1="1490.5" y1="846" x2="1490.5" y2="850.5" stroke="#45454a" stroke-width="1"/>
<line x1="1581.0" y1="846" x2="1581.0" y2="850.5" stroke="#45454a" stroke-width="1"/>
<line x1="1671.6" y1="846" x2="1671.6" y2="850.5" stroke="#45454a" stroke-width="1"/>
<line x1="1762.1" y1="846" x2="1762.1" y2="850.5" stroke="#45454a" stroke-width="1"/>
<line x1="1824" y1="846" x2="1824" y2="850.5" stroke="#45454a" stroke-width="1"/>
<rect x="425.3" y="840.2" width="2.5" height="4.8" fill="#2ebd85"/>
<rect x="432.0" y="838.1" width="2.5" height="6.9" fill="#f0284a"/>
<rect x="439.1" y="833.1" width="2.5" height="11.9" fill="#f0284a"/>
<rect x="446.1" y="840.2" width="2.5" height="4.8" fill="#f0284a"/>
<rect x="453.1" y="824.8" width="2.5" height="20.2" fill="#2ebd85"/>
<rect x="460.2" y="834.2" width="2.5" height="10.8" fill="#2ebd85"/>
<rect x="467.0" y="833.1" width="2.5" height="11.9" fill="#2ebd85"/>
<rect x="474.1" y="839.1" width="2.5" height="5.9" fill="#f0284a"/>
<rect x="481.1" y="836.7" width="2.5" height="8.3" fill="#2ebd85"/>
<rect x="487.8" y="825.3" width="2.5" height="19.7" fill="#f0284a"/>
<rect x="494.8" y="838.3" width="2.5" height="6.7" fill="#f0284a"/>
<rect x="501.9" y="840.2" width="2.5" height="4.8" fill="#2ebd85"/>
<rect x="508.9" y="844.1" width="2.5" height="0.9" fill="#2ebd85"/>
<rect x="515.9" y="840.2" width="2.5" height="4.8" fill="#2ebd85"/>
<rect x="522.7" y="829.5" width="2.5" height="15.5" fill="#2ebd85"/>
<rect x="529.7" y="840.2" width="2.5" height="4.8" fill="#f0284a"/>
<rect x="536.7" y="843.3" width="2.5" height="1.7" fill="#2ebd85"/>
<rect x="543.8" y="844.1" width="2.5" height="0.9" fill="#2ebd85"/>
<rect x="550.6" y="812.0" width="2.5" height="33.0" fill="#2ebd85"/>
<rect x="557.3" y="826.9" width="2.5" height="18.1" fill="#2ebd85"/>
<rect x="564.4" y="834.2" width="2.5" height="10.8" fill="#2ebd85"/>
<rect x="571.4" y="825.3" width="2.5" height="19.7" fill="#f0284a"/>
<rect x="578.4" y="840.2" width="2.5" height="4.8" fill="#2ebd85"/>
<rect x="585.2" y="843.6" width="2.5" height="1.4" fill="#2ebd85"/>
<rect x="592.2" y="844.1" width="2.5" height="0.9" fill="#f0284a"/>
<rect x="599.2" y="834.2" width="2.5" height="10.8" fill="#2ebd85"/>
<rect x="606.2" y="844.1" width="2.5" height="0.9" fill="#2ebd85"/>
<rect x="613.3" y="837.0" width="2.5" height="8.0" fill="#2ebd85"/>
<rect x="620.2" y="830.0" width="2.5" height="15.0" fill="#f0284a"/>
<rect x="627.2" y="831.2" width="2.5" height="13.8" fill="#2ebd85"/>
<rect x="634.2" y="823.4" width="2.5" height="21.6" fill="#f0284a"/>
<rect x="641.2" y="833.1" width="2.5" height="11.9" fill="#2ebd85"/>
<rect x="648.3" y="843.0" width="2.5" height="2.0" fill="#2ebd85"/>
<rect x="655.0" y="830.8" width="2.5" height="14.2" fill="#f0284a"/>
<rect x="662.0" y="838.9" width="2.5" height="6.1" fill="#2ebd85"/>
<rect x="669.1" y="838.9" width="2.5" height="6.1" fill="#f0284a"/>
<rect x="676.1" y="833.1" width="2.5" height="11.9" fill="#2ebd85"/>
<rect x="682.8" y="838.1" width="2.5" height="6.9" fill="#f0284a"/>
<rect x="689.7" y="821.9" width="2.5" height="23.1" fill="#2ebd85"/>
<rect x="696.6" y="831.6" width="2.5" height="13.4" fill="#2ebd85"/>
<rect x="703.6" y="801.4" width="2.5" height="43.6" fill="#f0284a"/>
<rect x="710.6" y="842.5" width="2.5" height="2.5" fill="#2ebd85"/>
<rect x="717.7" y="814.7" width="2.5" height="30.3" fill="#f0284a"/>
<rect x="724.7" y="842.5" width="2.5" height="2.5" fill="#f0284a"/>
<rect x="731.4" y="830.3" width="2.5" height="14.7" fill="#2ebd85"/>
<rect x="738.4" y="839.4" width="2.5" height="5.6" fill="#2ebd85"/>
<rect x="745.5" y="840.2" width="2.5" height="4.8" fill="#2ebd85"/>
<rect x="752.3" y="843.6" width="2.5" height="1.4" fill="#f0284a"/>
<rect x="766.4" y="838.9" width="2.5" height="6.1" fill="#2ebd85"/>
<rect x="773.1" y="828.1" width="2.5" height="16.9" fill="#2ebd85"/>
<rect x="780.2" y="835.2" width="2.5" height="9.8" fill="#2ebd85"/>
<rect x="787.2" y="838.3" width="2.5" height="6.7" fill="#2ebd85"/>
<rect x="794.2" y="839.1" width="2.5" height="5.9" fill="#f0284a"/>
<rect x="800.9" y="838.1" width="2.5" height="6.9" fill="#2ebd85"/>
<rect x="808.0" y="831.2" width="2.5" height="13.8" fill="#2ebd85"/>
<rect x="815.0" y="826.1" width="2.5" height="18.9" fill="#f0284a"/>
<rect x="822.0" y="838.9" width="2.5" height="6.1" fill="#2ebd85"/>
<rect x="829.1" y="838.3" width="2.5" height="6.7" fill="#f0284a"/>
<rect x="836.1" y="842.2" width="2.5" height="2.8" fill="#f0284a"/>
<rect x="843.1" y="842.0" width="2.5" height="3.0" fill="#2ebd85"/>
<rect x="850.0" y="838.1" width="2.5" height="6.9" fill="#f0284a"/>
<rect x="857.0" y="835.5" width="2.5" height="9.5" fill="#2ebd85"/>
<rect x="863.8" y="844.1" width="2.5" height="0.9" fill="#f0284a"/>
<rect x="870.8" y="836.2" width="2.5" height="8.8" fill="#f0284a"/>
<rect x="877.8" y="840.9" width="2.5" height="4.1" fill="#2ebd85"/>
<rect x="884.8" y="843.0" width="2.5" height="2.0" fill="#f0284a"/>
<rect x="898.6" y="842.5" width="2.5" height="2.5" fill="#f0284a"/>
<rect x="905.6" y="843.6" width="2.5" height="1.4" fill="#f0284a"/>
<rect x="912.7" y="837.8" width="2.5" height="7.2" fill="#2ebd85"/>
<rect x="919.7" y="844.4" width="2.5" height="0.6" fill="#2ebd85"/>
<rect x="926.6" y="843.3" width="2.5" height="1.7" fill="#2ebd85"/>
<rect x="933.6" y="836.2" width="2.5" height="8.8" fill="#f0284a"/>
<rect x="940.6" y="844.1" width="2.5" height="0.9" fill="#f0284a"/>
<rect x="947.3" y="842.2" width="2.5" height="2.8" fill="#f0284a"/>
<rect x="954.4" y="819.5" width="2.5" height="25.5" fill="#f0284a"/>
<rect x="961.4" y="840.2" width="2.5" height="4.8" fill="#2ebd85"/>
<rect x="968.4" y="843.3" width="2.5" height="1.7" fill="#f0284a"/>
<rect x="975.2" y="840.2" width="2.5" height="4.8" fill="#f0284a"/>
<rect x="982.2" y="844.1" width="2.5" height="0.9" fill="#2ebd85"/>
<rect x="996.2" y="820.9" width="2.5" height="24.1" fill="#2ebd85"/>
<rect x="1003.3" y="840.9" width="2.5" height="4.1" fill="#2ebd85"/>
<rect x="1010.0" y="843.0" width="2.5" height="2.0" fill="#2ebd85"/>
<rect x="1017.0" y="835.0" width="2.5" height="10.0" fill="#f0284a"/>
<rect x="1024.1" y="841.7" width="2.5" height="3.3" fill="#f0284a"/>
<rect x="1031.1" y="834.2" width="2.5" height="10.8" fill="#2ebd85"/>
<rect x="1038.1" y="839.1" width="2.5" height="5.9" fill="#2ebd85"/>
<rect x="1045.2" y="813.9" width="2.5" height="31.1" fill="#2ebd85"/>
<rect x="1051.9" y="811.6" width="2.5" height="33.4" fill="#2ebd85"/>
<rect x="1058.9" y="831.6" width="2.5" height="13.4" fill="#f0284a"/>
<rect x="1065.9" y="837.0" width="2.5" height="8.0" fill="#2ebd85"/>
<rect x="1072.8" y="820.2" width="2.5" height="24.8" fill="#2ebd85"/>
<rect x="1079.8" y="801.4" width="2.5" height="43.6" fill="#f0284a"/>
<rect x="1086.6" y="805.0" width="2.5" height="40.0" fill="#2ebd85"/>
<rect x="1093.6" y="832.0" width="2.5" height="13.0" fill="#f0284a"/>
<rect x="1100.6" y="800.6" width="2.5" height="44.4" fill="#f0284a"/>
<rect x="1107.7" y="844.1" width="2.5" height="0.9" fill="#f0284a"/>
<rect x="1114.7" y="844.4" width="2.5" height="0.6" fill="#2ebd85"/>
<rect x="1121.4" y="833.1" width="2.5" height="11.9" fill="#2ebd85"/>
<rect x="1128.4" y="844.1" width="2.5" height="0.9" fill="#2ebd85"/>
<rect x="1135.5" y="843.6" width="2.5" height="1.4" fill="#f0284a"/>
<rect x="1142.3" y="837.5" width="2.5" height="7.5" fill="#f0284a"/>
<rect x="1149.4" y="830.3" width="2.5" height="14.7" fill="#2ebd85"/>
<rect x="1156.4" y="841.4" width="2.5" height="3.6" fill="#2ebd85"/>
<rect x="1163.4" y="830.3" width="2.5" height="14.7" fill="#f0284a"/>
<rect x="1170.2" y="831.2" width="2.5" height="13.8" fill="#f0284a"/>
<rect x="1177.2" y="844.4" width="2.5" height="0.6" fill="#f0284a"/>
<rect x="1184.2" y="831.2" width="2.5" height="13.8" fill="#f0284a"/>
<rect x="1191.2" y="833.1" width="2.5" height="11.9" fill="#f0284a"/>
<rect x="1198.3" y="842.2" width="2.5" height="2.8" fill="#2ebd85"/>
<rect x="1205.3" y="840.2" width="2.5" height="4.8" fill="#f0284a"/>
<rect x="1212.3" y="844.1" width="2.5" height="0.9" fill="#f0284a"/>
<rect x="1219.1" y="837.3" width="2.5" height="7.7" fill="#2ebd85"/>
<rect x="1226.1" y="835.0" width="2.5" height="10.0" fill="#f0284a"/>
<rect x="1233.1" y="844.1" width="2.5" height="0.9" fill="#f0284a"/>
<rect x="1240.2" y="837.5" width="2.5" height="7.5" fill="#2ebd85"/>
<rect x="1247.2" y="829.2" width="2.5" height="15.8" fill="#f0284a"/>
<rect x="1253.8" y="824.5" width="2.5" height="20.5" fill="#f0284a"/>
<rect x="1260.8" y="841.7" width="2.5" height="3.3" fill="#2ebd85"/>
<rect x="1267.8" y="839.7" width="2.5" height="5.3" fill="#f0284a"/>
<rect x="1274.8" y="844.4" width="2.5" height="0.6" fill="#2ebd85"/>
<rect x="1281.6" y="837.0" width="2.5" height="8.0" fill="#2ebd85"/>
<rect x="1288.6" y="839.8" width="2.5" height="5.2" fill="#f0284a"/>
<rect x="1295.6" y="843.0" width="2.5" height="2.0" fill="#f0284a"/>
<rect x="1302.3" y="839.1" width="2.5" height="5.9" fill="#f0284a"/>
<rect x="1309.4" y="838.1" width="2.5" height="6.9" fill="#f0284a"/>
<rect x="1316.4" y="833.1" width="2.5" height="11.9" fill="#2ebd85"/>
<rect x="1323.4" y="840.9" width="2.5" height="4.1" fill="#2ebd85"/>
<rect x="1330.5" y="835.0" width="2.5" height="10.0" fill="#2ebd85"/>
<rect x="1337.2" y="843.0" width="2.5" height="2.0" fill="#2ebd85"/>
<rect x="1344.2" y="836.7" width="2.5" height="8.3" fill="#f0284a"/>
<rect x="1351.2" y="835.0" width="2.5" height="10.0" fill="#2ebd85"/>
<rect x="1358.1" y="838.1" width="2.5" height="6.9" fill="#2ebd85"/>
<rect x="1365.2" y="832.0" width="2.5" height="13.0" fill="#f0284a"/>
<rect x="1372.2" y="841.4" width="2.5" height="3.6" fill="#2ebd85"/>
<rect x="1379.2" y="843.3" width="2.5" height="1.7" fill="#2ebd85"/>
<rect x="1385.9" y="824.1" width="2.5" height="20.9" fill="#f0284a"/>
<rect x="1393.0" y="838.1" width="2.5" height="6.9" fill="#f0284a"/>
<rect x="1400.0" y="838.1" width="2.5" height="6.9" fill="#f0284a"/>
<rect x="1407.0" y="842.2" width="2.5" height="2.8" fill="#2ebd85"/>
<rect x="1414.1" y="841.7" width="2.5" height="3.3" fill="#f0284a"/>
<rect x="1421.1" y="839.4" width="2.5" height="5.6" fill="#f0284a"/>
<rect x="1427.8" y="842.2" width="2.5" height="2.8" fill="#2ebd85"/>
<rect x="1434.8" y="842.2" width="2.5" height="2.8" fill="#2ebd85"/>
<rect x="1441.9" y="838.9" width="2.5" height="6.1" fill="#f0284a"/>
<rect x="1448.8" y="839.8" width="2.5" height="5.2" fill="#2ebd85"/>
<rect x="1455.8" y="841.7" width="2.5" height="3.3" fill="#f0284a"/>
<rect x="1462.8" y="844.1" width="2.5" height="0.9" fill="#f0284a"/>
<rect x="1469.5" y="836.2" width="2.5" height="8.8" fill="#f0284a"/>
<rect x="1476.6" y="843.6" width="2.5" height="1.4" fill="#f0284a"/>
<rect x="1483.6" y="834.7" width="2.5" height="10.3" fill="#2ebd85"/>
<rect x="1490.3" y="823.0" width="2.5" height="22.0" fill="#f0284a"/>
<rect x="1497.3" y="840.9" width="2.5" height="4.1" fill="#2ebd85"/>
<rect x="1504.4" y="828.0" width="2.5" height="17.0" fill="#f0284a"/>
<rect x="1511.4" y="833.9" width="2.5" height="11.1" fill="#2ebd85"/>
<rect x="1525.3" y="833.9" width="2.5" height="11.1" fill="#2ebd85"/>
<rect x="1532.3" y="830.8" width="2.5" height="14.2" fill="#2ebd85"/>
<rect x="1539.4" y="836.7" width="2.5" height="8.3" fill="#2ebd85"/>
<rect x="1546.1" y="839.4" width="2.5" height="5.6" fill="#f0284a"/>
<rect x="1553.1" y="843.6" width="2.5" height="1.4" fill="#2ebd85"/>
<rect x="1560.2" y="840.9" width="2.5" height="4.1" fill="#f0284a"/>
<rect x="1567.2" y="837.0" width="2.5" height="8.0" fill="#2ebd85"/>
<rect x="1574.1" y="839.4" width="2.5" height="5.6" fill="#f0284a"/>
<rect x="1581.1" y="841.4" width="2.5" height="3.6" fill="#f0284a"/>
<rect x="1588.1" y="842.0" width="2.5" height="3.0" fill="#f0284a"/>
<rect x="1595.0" y="826.9" width="2.5" height="18.1" fill="#f0284a"/>
<rect x="1602.0" y="842.0" width="2.5" height="3.0" fill="#2ebd85"/>
<rect x="1608.8" y="836.7" width="2.5" height="8.3" fill="#2ebd85"/>
<rect x="1615.8" y="836.7" width="2.5" height="8.3" fill="#2ebd85"/>
<rect x="1622.8" y="842.0" width="2.5" height="3.0" fill="#f0284a"/>
<rect x="1629.8" y="832.0" width="2.5" height="13.0" fill="#f0284a"/>
<rect x="1636.9" y="838.1" width="2.5" height="6.9" fill="#f0284a"/>
<rect x="1643.6" y="842.0" width="2.5" height="3.0" fill="#2ebd85"/>
<rect x="1650.6" y="842.2" width="2.5" height="2.8" fill="#2ebd85"/>
<rect x="1657.7" y="838.1" width="2.5" height="6.9" fill="#f0284a"/>
<rect x="1664.7" y="835.0" width="2.5" height="10.0" fill="#f0284a"/>
<rect x="1671.6" y="844.1" width="2.5" height="0.9" fill="#f0284a"/>
<rect x="1678.6" y="843.0" width="2.5" height="2.0" fill="#2ebd85"/>
<rect x="1685.6" y="840.2" width="2.5" height="4.8" fill="#2ebd85"/>
<rect x="1692.3" y="840.2" width="2.5" height="4.8" fill="#f0284a"/>
<rect x="1699.4" y="836.7" width="2.5" height="8.3" fill="#f0284a"/>
<rect x="1706.4" y="835.0" width="2.5" height="10.0" fill="#f0284a"/>
<rect x="1713.4" y="835.8" width="2.5" height="9.2" fill="#2ebd85"/>
<rect x="1720.5" y="832.8" width="2.5" height="12.2" fill="#f0284a"/>
<rect x="1727.5" y="843.3" width="2.5" height="1.7" fill="#f0284a"/>
<rect x="1734.2" y="844.1" width="2.5" height="0.9" fill="#2ebd85"/>
<rect x="1741.2" y="842.0" width="2.5" height="3.0" fill="#2ebd85"/>
<rect x="1748.3" y="843.0" width="2.5" height="2.0" fill="#2ebd85"/>
<rect x="1755.3" y="832.0" width="2.5" height="13.0" fill="#2ebd85"/>
<rect x="1762.2" y="842.2" width="2.5" height="2.8" fill="#f0284a"/>
<rect x="1769.2" y="841.4" width="2.5" height="3.6" fill="#2ebd85"/>
<rect x="1776.2" y="839.8" width="2.5" height="5.2" fill="#f0284a"/>
<rect x="1783.3" y="843.0" width="2.5" height="2.0" fill="#2ebd85"/>
<rect x="1790.0" y="838.9" width="2.5" height="6.1" fill="#f0284a"/>
<rect x="1797.0" y="840.9" width="2.5" height="4.1" fill="#f0284a"/>
<rect x="1804.1" y="840.9" width="2.5" height="4.1" fill="#2ebd85"/>
<rect x="1811.1" y="842.0" width="2.5" height="3.0" fill="#2ebd85"/>
<rect x="1818.1" y="839.4" width="2.5" height="5.6" fill="#f0284a"/>
<rect x="420.9" y="715.0" width="2.5" height="130.0" fill="#f0284a"/>
<rect x="692.5" y="721.6" width="2.5" height="123.4" fill="#f0284a"/>
<rect x="957.1" y="701.0" width="2.5" height="144.0" fill="#2ebd85"/>
<rect x="1403.0" y="720.8" width="2.5" height="124.2" fill="#f0284a"/>
<rect x="1667.5" y="697.2" width="2.5" height="147.8" fill="#2ebd85"/>
<text x="135.4" y="862" text-anchor="middle" class="xl">2025-01-02</text>
<text x="225.5" y="862" text-anchor="middle" class="xl">2025-01-21</text>
<text x="316" y="862" text-anchor="middle" class="xl">2025-02-17</text>
<text x="406.4" y="862" text-anchor="middle" class="xl">2025-03-06</text>
<text x="497" y="862" text-anchor="middle" class="xl">2025-03-25</text>
<text x="587.5" y="862" text-anchor="middle" class="xl">2025-04-14</text>
<text x="678" y="862" text-anchor="middle" class="xl">2025-05-06</text>
<text x="768.5" y="862" text-anchor="middle" class="xl">2025-05-23</text>
<text x="859" y="862" text-anchor="middle" class="xl">2025-06-12</text>
<text x="949.5" y="862" text-anchor="middle" class="xl">2025-07-01</text>
<text x="1040" y="862" text-anchor="middle" class="xl">2025-07-18</text>
<text x="1130.5" y="862" text-anchor="middle" class="xl">2025-08-06</text>
<text x="1221" y="862" text-anchor="middle" class="xl">2025-08-25</text>
<text x="1311.5" y="862" text-anchor="middle" class="xl">2025-09-11</text>
<text x="1402" y="862" text-anchor="middle" class="xl">2025-09-30</text>
<text x="1492.5" y="862" text-anchor="middle" class="xl">2025-10-27</text>
<text x="1583" y="862" text-anchor="middle" class="xl">2025-11-13</text>
<text x="1674.2" y="862" text-anchor="middle" class="xl">2025-12-02</text>
<text x="1820" y="862" text-anchor="middle" class="xl">2025-12-31</text>
<rect x="135.5" y="883.5" width="1691" height="7.5" fill="#9a9fb0"/>
<rect x="135.5" y="891" width="1691" height="13.5" fill="#46356f"/>
<polygon points="135.5,900.6 426.0,900.6 448.0,901.5 464.0,899.4 482.0,898.8 495.0,900.0 526.0,899.0 548.0,898.4 564.0,896.2 589.0,896.9 620.0,896.2 651.0,896.9 682.0,896.2 701.0,895.3 720.0,897.5 728.0,898.7 762.0,897.8 809.0,896.0 856.0,896.2 919.0,896.2 959.0,897.8 997.0,897.8 1044.0,896.2 1059.0,894.1 1078.0,892.8 1087.0,894.7 1094.0,893.1 1106.0,895.3 1153.0,894.7 1200.0,896.9 1247.0,896.9 1263.0,898.1 1300.0,897.5 1354.0,897.8 1385.0,897.8 1447.0,899.4 1510.0,900.6 1572.0,899.4 1635.0,900.0 1729.0,901.9 1826.0,901.6 1826.0,904.5 135.5,904.5" fill="#5b4f97"/>
<polyline points="135.5,900.6 426.0,900.6 448.0,901.5 464.0,899.4 482.0,898.8 495.0,900.0 526.0,899.0 548.0,898.4 564.0,896.2 589.0,896.9 620.0,896.2 651.0,896.9 682.0,896.2 701.0,895.3 720.0,897.5 728.0,898.7 762.0,897.8 809.0,896.0 856.0,896.2 919.0,896.2 959.0,897.8 997.0,897.8 1044.0,896.2 1059.0,894.1 1078.0,892.8 1087.0,894.7 1094.0,893.1 1106.0,895.3 1153.0,894.7 1200.0,896.9 1247.0,896.9 1263.0,898.1 1300.0,897.5 1354.0,897.8 1385.0,897.8 1447.0,899.4 1510.0,900.6 1572.0,899.4 1635.0,900.0 1729.0,901.9 1826.0,901.6" fill="none" stroke="#7068c4" stroke-width="0.9"/>
<line x1="135.5" y1="904.5" x2="1826.5" y2="904.5" stroke="#77777c" stroke-width="1"/>
<rect x="134.5" y="893" width="2.4" height="8" rx="1.2" fill="#f0f0f0"/>
<rect x="1825" y="893" width="2.4" height="8" rx="1.2" fill="#f0f0f0"/>
<line x1="136" y1="890" x2="154" y2="890" stroke="#d8d8e0" stroke-width="0.6"/>
<line x1="1808" y1="890" x2="1826" y2="890" stroke="#d8d8e0" stroke-width="0.6"/>
<rect x="978" y="885" width="1.2" height="3.5" fill="#fff"/><rect x="980.2" y="885" width="1.2" height="3.5" fill="#fff"/><rect x="982.4" y="885" width="1.2" height="3.5" fill="#fff"/>
</svg>
<div class="abs tip"></div>
<div class="abs tt" style="left:1000px;top:591px">2025-07-04</div>
<div class="abs dot" style="left:1000px;top:617px;background:#1e9fff"></div>
<div class="abs tt" style="left:1019px;top:612px">策略收益: 0.0827%</div>
<div class="abs dot" style="left:1000px;top:638px;background:#37b2b0"></div>
<div class="abs tt" style="left:1019px;top:633px">基准收益: 6.4293%</div>
<div class="abs dot" style="left:1000px;top:659px;background:#9b42dc"></div>
<div class="abs tt" style="left:1019px;top:654px">超额收益: -6.9739%</div>
</body></html>
